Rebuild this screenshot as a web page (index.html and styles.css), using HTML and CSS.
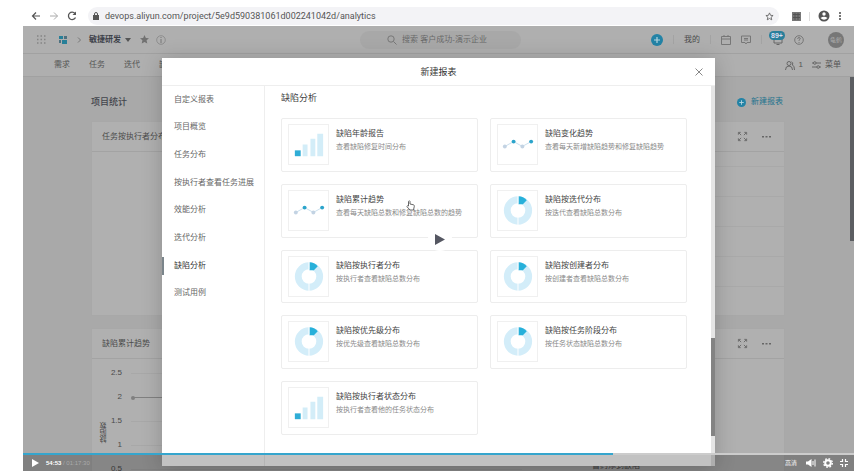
FILE: index.html
```html
<!DOCTYPE html>
<html lang="zh-CN">
<head>
<meta charset="utf-8">
<title>新建报表</title>
<link rel="stylesheet" href="styles.css">
</head>
<body>
<svg width="0" height="0" class="defs" aria-hidden="true">
  <defs>
    <symbol id="bars" viewBox="0 0 40 40">
      <path fill="#d3edf8" d="M14 20h5v12h-5zM22 14h5v18h-5zM29 9h6v23h-6z"/>
      <path fill="#2fadd6" d="M6 26h6v6H6z"/>
    </symbol>
    <symbol id="line" viewBox="0 0 40 40">
      <path fill="none" stroke="#c9dfee" d="M7 22l9-5 9 5 9-5"/>
      <circle cx="7" cy="22" r="2" fill="#c3d3e3"/><circle cx="25" cy="22" r="2" fill="#c3d3e3"/>
      <circle cx="16" cy="17" r="2" fill="#2ba4cb"/><circle cx="34" cy="17" r="2" fill="#2ba4cb"/>
    </symbol>
    <symbol id="ring" viewBox="0 0 40 40">
      <circle cx="20.500" cy="20" r="11" fill="none" stroke="#d3edf9" stroke-width="7"/>
      <path fill="#27b0da" d="M21 5.500q5 0 8.500 4l-4 4h-4.500z"/>
      <path stroke="#fff" d="M20.500 5v8M20.500 27v8"/>
    </symbol>
    <symbol id="expand" viewBox="0 0 12 12">
      <path fill="none" stroke="#666" d="M1.500 4V1.500H4M8 1.500h2.500V4M1.500 8v2.500H4M10.500 8v2.500H8M2 2l2.500 2.500M10 2L7.500 4.500M2 10l2.500-2.500M10 10L7.500 7.500"/>
    </symbol>
    <symbol id="more" viewBox="0 0 9 3">
      <path fill="#666" d="M0 1h2v1.500H0zM3.500 1h2v1.500h-2zM7 1h2v1.500H7z"/>
    </symbol>
    <symbol id="plus" viewBox="0 0 12 12">
      <circle cx="6" cy="6" r="6" fill="#2383a6"/><path stroke="#b5d5df" stroke-width="1.200" d="M6 3v6M3 6h6"/>
    </symbol>
  </defs>
</svg>
<div class="stage">
  <div class="browser">
    <button class="ico" aria-label="后退"><svg width="10" height="10" viewBox="0 0 10 10"><path fill="none" stroke="#555" stroke-width="1.200" d="M9 5H1.500M5 1.500L1.500 5 5 8.500"/></svg></button>
    <button class="ico" aria-label="前进"><svg width="10" height="10" viewBox="0 0 10 10"><path fill="none" stroke="#aaa" d="M1 5h7.500M5 1.500L8.500 5 5 8.500"/></svg></button>
    <button class="ico" aria-label="刷新"><svg width="10" height="10" viewBox="0 0 10 10"><path fill="none" stroke="#555" stroke-width="1.300" d="M8.500 6.500a3.700 3.700 0 1 1-.5-4"/><path fill="#555" d="M9 .5V4H5.500z"/></svg></button>
    <div class="address">
      <svg width="6" height="8" viewBox="0 0 6 8"><path fill="#555" d="M0 3h6v5H0z"/><path fill="none" stroke="#555" d="M1.500 3V2a1.500 1.500 0 0 1 3 0v1"/></svg>
      <span class="url">devops.aliyun.com/project/5e9d590381061d002241042d/analytics</span>
      <svg width="9" height="9" viewBox="0 0 10 10"><path fill="none" stroke="#666" d="M5 1l1.200 2.700 2.800.2-2.200 1.900.7 2.900L5 7.200 2.500 8.700l.7-2.900L1 3.900l2.800-.2z"/></svg>
    </div>
    <svg class="ext" width="9" height="9" viewBox="0 0 9 9"><path fill="#777" d="M0 0h9v9H0z"/><path stroke="#555" d="M1 2.500h7M1 5.500h7M3 1v7M6 1v7"/></svg>
    <i class="rule"></i>
    <svg width="12" height="12" viewBox="0 0 12 12"><circle cx="6" cy="6" r="5.500" fill="#555"/><circle cx="6" cy="4" r="1.700" fill="#fff"/><path fill="#fff" d="M2.500 8q3.500-2.500 7 0-3.500 3.500-7 0z"/></svg>
    <svg width="4" height="10" viewBox="0 0 4 10"><path fill="#777" d="M1 1h2v2H1zM1 4h2v2H1zM1 7h2v2H1z"/></svg>
  </div>
  <div class="app">
    <header class="top">
      <div class="crumbs">
        <svg width="9" height="9" viewBox="0 0 9 9"><path stroke="#858585" stroke-width="1.500" stroke-dasharray="1.500 2" d="M0 1h9M0 4.500h9M0 8h9"/></svg>
        <svg class="logo" width="8" height="8" viewBox="0 0 8 8"><path fill="#277f98" d="M0 0h4v3H0zM3 4h5v4H3z"/><path fill="#4d7180" d="M5 0h3v3H5zM0 4h2v3H0z"/></svg>
        <svg width="4" height="6" viewBox="0 0 4 6"><path fill="none" stroke="#777" d="M1 .5L3.500 3 1 5.500"/></svg>
        <b class="project">敏捷研发</b>
        <svg width="6" height="4" viewBox="0 0 6 4"><path fill="#555" d="M0 0h6L3 4z"/></svg>
        <svg class="star" width="9" height="9" viewBox="0 0 10 10"><path fill="#717171" d="M5 0l1.500 3.300 3.500.3-2.700 2.300.8 3.600L5 7.700 1.900 9.500l.8-3.600L0 3.600l3.500-.3z"/></svg>
        <svg width="10" height="10" viewBox="0 0 10 10"><circle cx="5" cy="5" r="4.300" fill="none" stroke="#858585" stroke-width=".8"/><path stroke="#777" d="M5 2v1M5 4v4"/></svg>
      </div>
      <label class="search">
        <svg width="10" height="10" viewBox="0 0 10 10"><circle cx="4" cy="4" r="3.200" fill="none" stroke="#777"/><path stroke="#777" d="M6.500 6.500L9.500 9.500"/></svg>
        <input type="text" placeholder="搜索 客户成功-演示企业" aria-label="搜索">
      </label>
      <div class="tools">
        <svg width="12" height="12"><use href="#plus"/></svg>
        <i class="rule"></i><span>我的</span><i class="rule"></i>
        <svg width="10" height="10" viewBox="0 0 10 10"><path fill="none" stroke="#777" d="M.5 1.500h9v8h-9zM.5 4h9M3 0v2M7 0v2"/></svg>
        <svg width="10" height="10" viewBox="0 0 10 10"><path fill="none" stroke="#777" d="M.5 1h9v6.500H6L5 9 4 7.500H.5zM3 3.500h4M3 5h4"/></svg>
        <i class="rule"></i>
        <span class="bell"><svg width="12" height="12" viewBox="0 0 12 12"><path fill="none" stroke="#666" d="M2 9h8V4H2zM4.500 10.500h3"/></svg><em>89+</em></span>
        <svg width="10" height="10" viewBox="0 0 10 10"><circle cx="5" cy="5" r="4.300" fill="none" stroke="#777"/><path fill="none" stroke="#777" d="M3.700 4q0-1.500 1.300-1.500T6.300 4L5 5.200V6M5 7v1"/></svg>
        <span class="avatar">龟鹤</span>
      </div>
    </header>
    <nav class="tabs">
      <a href="#">需求</a><a href="#">任务</a><a href="#">迭代</a><a href="#">缺陷</a>
      <div class="menu">
        <svg width="10" height="9" viewBox="0 0 10 9"><circle cx="4" cy="2.500" r="2" fill="none" stroke="#666"/><path fill="none" stroke="#666" d="M.5 9q0-4 3.500-4t3.500 4M6.500.8q2 .5 1 3.200Q9.500 5 9.500 9"/></svg>
        <span>1</span>
        <svg class="sliders" width="9" height="8" viewBox="0 0 9 8"><path fill="none" stroke="#666" d="M0 2h1.500M4 2h5M0 6h5M7.500 6h1.500"/><circle cx="2.800" cy="2" r="1.300" fill="none" stroke="#666"/><circle cx="6.200" cy="6" r="1.300" fill="none" stroke="#666"/></svg>
        <span>菜单</span>
      </div>
    </nav>
    <main class="page">
      <div class="heading"><h1>项目统计</h1><button class="new"><svg width="9" height="9"><use href="#plus"/></svg>新建报表</button></div>
      <section class="panel">
        <div class="panel-head"><h2>任务按执行者分布</h2><svg width="11" height="11"><use href="#expand"/></svg><svg width="9" height="3"><use href="#more"/></svg></div>
        <div class="plot"></div>
      </section>
      <section class="panel">
        <div class="panel-head"><h2>缺陷累计趋势</h2><svg width="11" height="11"><use href="#expand"/></svg><svg width="9" height="3"><use href="#more"/></svg></div>
        <div class="trend">
          <span class="axis">缺陷数</span>
          <div class="ticks"><div><span>2.5</span></div><div class="point"><span>2</span></div><div><span>1.5</span></div><div><span>1</span></div><div><span>0.5</span></div></div>
          <span class="legend">暂约添到缺陷</span>
        </div>
      </section>
    </main>
    <i class="page-thumb"></i>
  </div>

  <div class="dialog" role="dialog" aria-label="新建报表">
    <div class="dialog-head"><h2>新建报表</h2><button class="close" aria-label="关闭"><svg width="8" height="8" viewBox="0 0 8 8"><path stroke="#888" d="M.5.5l7 7M7.500.5l-7 7"/></svg></button></div>
    <div class="dialog-body">
      <nav class="side">
        <a href="#">自定义报表</a><a href="#">项目概览</a><a href="#">任务分布</a><a href="#">按执行者查看任务进展</a><a href="#">效能分析</a><a href="#">迭代分析</a><a href="#" class="active">缺陷分析</a><a href="#">测试用例</a>
      </nav>
      <div class="content">
        <h3>缺陷分析</h3>
        <div class="cards">
          <article class="card"><svg><use href="#bars"/></svg><div><h4>缺陷年龄报告</h4><p>查看缺陷修复时间分布</p></div></article>
          <article class="card"><svg><use href="#line"/></svg><div><h4>缺陷变化趋势</h4><p>查看每天新增缺陷趋势和修复缺陷趋势</p></div></article>
          <article class="card"><svg><use href="#line"/></svg><div><h4>缺陷累计趋势</h4><p>查看每天缺陷总数和修复缺陷总数的趋势</p></div></article>
          <article class="card"><svg><use href="#ring"/></svg><div><h4>缺陷按迭代分布</h4><p>按迭代查看缺陷总数分布</p></div></article>
          <article class="card"><svg><use href="#ring"/></svg><div><h4>缺陷按执行者分布</h4><p>按执行者查看缺陷总数分布</p></div></article>
          <article class="card"><svg><use href="#ring"/></svg><div><h4>缺陷按创建者分布</h4><p>按创建者查看缺陷总数分布</p></div></article>
          <article class="card"><svg><use href="#ring"/></svg><div><h4>缺陷按优先级分布</h4><p>按优先级查看缺陷总数分布</p></div></article>
          <article class="card"><svg><use href="#ring"/></svg><div><h4>缺陷按任务阶段分布</h4><p>按任务状态缺陷总数分布</p></div></article>
          <article class="card"><svg><use href="#bars"/></svg><div><h4>缺陷按执行者状态分布</h4><p>按执行者查看他的任务状态分布</p></div></article>
        </div>
      </div>
      <div class="track"><i></i></div>
    </div>
  </div>

  <svg class="cursor" width="9" height="11" viewBox="0 0 9 11"><path fill="#fff" stroke="#555" stroke-width=".9" d="M2.500 6V1.500q1-1.500 1.500 0v2.500l3.500.8q1 .3.800 1.500L7.500 10H4L.8 6.500q.7-1.200 1.700-.5z"/></svg>
  <button class="big-play" aria-label="播放视频"><svg width="10" height="11" viewBox="0 0 10 11"><path fill="#555762" d="M0 0l10 5.500L0 11z"/></svg></button>

  <div class="player">
    <div class="progress"><i></i></div>
    <div class="controls">
      <button class="ico" aria-label="播放"><svg width="7" height="8" viewBox="0 0 7 8"><path fill="#fff" d="M0 0l7 4-7 4z"/></svg></button>
      <span class="time"><b>54:53</b> / 01:17:30</span>
      <span class="quality">高清</span>
      <button class="ico" aria-label="音量"><svg width="10" height="8" viewBox="0 0 10 8"><path fill="#fff" d="M0 2.500h2L5.500 0v8L2 5.500H0z"/><path fill="none" stroke="#fff" d="M7 2v4M9 .5v7"/></svg></button>
      <button class="ico" aria-label="设置"><svg width="10" height="10" viewBox="0 0 10 10"><circle cx="5" cy="5" r="2.800" fill="none" stroke="#fff" stroke-width="2"/><circle cx="5" cy="5" r="4.300" fill="none" stroke="#fff" stroke-width="1.400" stroke-dasharray="1.700 1.677"/></svg></button>
      <button class="ico" aria-label="退出全屏"><svg width="8" height="8" viewBox="0 0 8 8"><path fill="none" stroke="#fff" stroke-width="1.200" d="M0 2.500h2.500V0M5.500 0v2.500H8M0 5.500h2.500V8M5.500 8V5.500H8"/></svg></button>
    </div>
  </div>
</div>
</body>
</html>
```
FILE: styles.css
```css
* { box-sizing: border-box; }
body { margin: 0; background: #fff; font-family: "Liberation Sans", "Noto Sans CJK SC", sans-serif; font-size: 8px; line-height: 12px; color: #4b4b4b; }
h1, h2, h3, h4, p { margin: 0; font-size: inherit; font-weight: 400; }
a { color: inherit; text-decoration: none; }
svg { display: block; flex: none; }
button { border: 0; padding: 0; background: none; font: inherit; color: inherit; display: flex; align-items: center; }
.defs { position: absolute; }
.stage { position: relative; height: calc(100vh - 6px); min-height: 465px; margin: 6px 9px 0 23px; display: flex; flex-direction: column; overflow: hidden; }

.browser { height: 20px; display: flex; align-items: center; gap: 8px; padding: 0 12px 0 8px; flex: none; }
.address { flex: 1; height: 18px; display: flex; align-items: center; gap: 6px; padding: 0 5px; margin: 0 5px 0 3px; border-radius: 9px; background: #f3f3f6; }
.url { flex: 1; font: 9px/18px Roboto, sans-serif; color: #555; }
.rule { width: 1px; height: 9px; background: #a3a3a3; }
.browser .rule { background: #ddd; }

.app { position: relative; flex: 1; min-height: 0; display: flex; flex-direction: column; background: #a9a9a9; overflow: hidden; }
.top { height: 28px; flex: none; display: grid; grid-template-columns: 1fr 161px 1fr; align-items: center; padding: 0 10px 0 14px; background: #afafaf; border-bottom: 1px solid #a1a1a1; }
.crumbs, .tools { display: flex; align-items: center; }
.logo { margin: 0 10px 0 13px; }
.project { margin: 0 4px 0 8px; color: #3d4149; }
.star { margin: 0 7px 0 9px; }
.search { height: 18px; display: flex; align-items: center; gap: 5px; padding-left: 27px; border-radius: 9px; background: #a8a8a8; }
.search input { flex: 1; min-width: 0; border: 0; padding: 0; background: none; font: inherit; }
.search input::placeholder { color: #696969; }
.tools { justify-content: flex-end; gap: 10px; }
.bell { position: relative; }
.bell em { position: absolute; left: -3px; top: -3px; padding: 0 2px; border-radius: 5px; background: #2a7f9b; color: #dde; font: 700 7px/9px "Liberation Sans", sans-serif; }
.avatar { width: 16px; height: 16px; margin-left: 14px; border-radius: 50%; background: #777; color: #aaa; font-size: 6px; line-height: 16px; text-align: center; }
.tabs { height: 23px; flex: none; display: flex; align-items: center; gap: 19px; padding: 0 13px 0 31px; background: #afafaf; border-bottom: 1px solid #a1a1a1; color: #555; }
.menu { margin-left: auto; display: flex; align-items: center; gap: 4px; }
.sliders { margin-left: 5px; }

.page { padding: 18px 69px 0 68px; }
.heading { display: flex; justify-content: space-between; align-items: center; height: 14px; padding-right: 2px; margin-bottom: 12px; }
.heading h1 { font-size: 9px; font-weight: 500; color: #44464d; }
.new { gap: 5px; color: #23738e; }
.panel { height: 195px; margin-bottom: 12px; background: #b0b0b0; border: 1px solid #a8a8a8; }
.panel-head { height: 30px; display: flex; align-items: center; gap: 14px; padding: 0 13px 0 10px; border-bottom: 1px solid #a3a3a3; }
.panel-head h2 { flex: 1; }
.plot { height: 150px; margin: -15px 0 0 50%; background: repeating-linear-gradient(transparent 0 29px, #a9a9a9 29px 30px); }
.trend { position: relative; display: flex; padding: 8px 0 0 6px; }
.axis { writing-mode: vertical-rl; transform: rotate(180deg); align-self: center; height: 24px; margin-top: 8px; font-size: 7px; }
.ticks { width: 60%; }
.ticks div { display: flex; height: 24px; align-items: flex-start; gap: 9px; }
.ticks span { width: 12px; text-align: right; }
.ticks div::after { content: ""; flex: 1; height: 1px; margin-top: 6px; background: #a8a8a8; }
.ticks .point::after { background: #808080; }
.ticks .point::before { content: ""; order: 1; width: 4px; height: 4px; margin: 5px -11px 0 0; border-radius: 50%; background: #808080; }
.ticks .point::after { order: 2; }
.legend { position: absolute; left: 500px; top: 101px; }
.page-thumb { position: absolute; right: 0; top: 51px; width: 4px; height: 164px; background: #5c5e62; }

.dialog { position: absolute; top: 52px; bottom: 5px; left: 139px; right: 139px; display: flex; flex-direction: column; background: #fff; box-shadow: 0 2px 20px rgba(0,0,0,.2); }
.dialog-head { height: 28px; flex: none; display: flex; align-items: center; padding: 0 12px 0 20px; border-bottom: 1px solid #eee; }
.dialog-head h2 { flex: 1; font-size: 9px; text-align: center; color: #333; }
.dialog-body { flex: 1; min-height: 0; display: flex; }
.side { width: 102px; height: 221px; display: grid; grid-auto-rows: 1fr; align-items: center; color: #666; }
.side a { padding-left: 12px; line-height: 18px; white-space: nowrap; }
.side .active { color: #333; border-left: 2px solid #7b858b; padding-left: 10px; }
.content { flex: 1; padding: 5px 24px 0 16px; border-left: 1px solid #eee; }
.content h3 { font-size: 9px; line-height: 14px; margin-bottom: 13px; color: #444; }
.cards { display: grid; grid-template-columns: 1fr 1fr; grid-auto-rows: 1fr; gap: 12px; height: 317px; }
.card { min-height: 0; display: flex; gap: 7px; padding: 5px 6px; border: 1px solid #ededed; border-radius: 2px; }
.card svg { width: 41px; height: 41px; border: 1px solid #f0f0f0; }
.card h4 { margin-top: 3px; line-height: 13px; color: #444; }
.card p { font-size: 7px; line-height: 14px; color: #8a8a8a; white-space: nowrap; }
.track { width: 4px; background: #e5e5e5; padding-top: 252px; }
.track i { display: block; height: 98px; background: #838383; }

.cursor { position: absolute; left: 383px; top: 194px; }
.big-play { position: absolute; left: 50%; top: 221px; width: 24px; height: 24px; margin-left: -11px; justify-content: center; border-radius: 50%; background: #fff; }
.player { position: absolute; left: 0; right: 0; bottom: 0; height: 18px; background: rgba(0,0,0,.24); }
.progress { height: 2px; background: #ccc; }
.progress i { display: block; width: 71%; height: 100%; background: #35a5cd; }
.controls { height: 16px; display: flex; align-items: center; gap: 7px; padding: 0 6px 0 9px; color: #fff; }
.time { flex: 1; font-size: 6px; color: #aaa; }
.time b { color: #fff; }
.quality { font-size: 6px; margin-right: 2px; }
```
